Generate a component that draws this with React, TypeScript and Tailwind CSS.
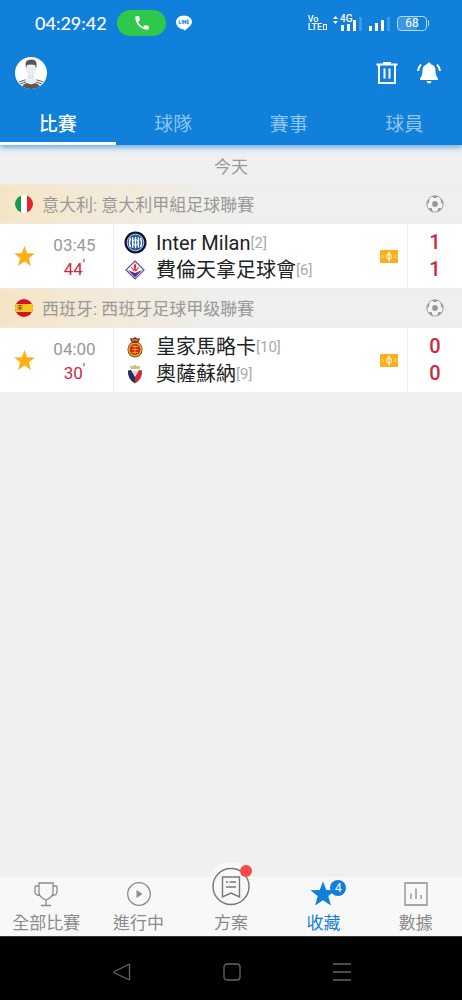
import React from 'react';
import clsx from 'clsx';

const tabs = ['比賽', '球隊', '賽事', '球員'];

const leagues = [
  {
    name: '意大利: 意大利甲組足球聯賽',
    Flag: ItalyFlag,
    time: '03:45',
    minute: '44',
    teams: [
      { name: 'Inter Milan', rank: 2, score: 1, Crest: InterCrest },
      { name: '費倫天拿足球會', rank: 6, score: 1, Crest: FiorentinaCrest },
    ],
  },
  {
    name: '西班牙: 西班牙足球甲级聯賽',
    Flag: SpainFlag,
    time: '04:00',
    minute: '30',
    teams: [
      { name: '皇家馬略卡', rank: 10, score: 0, Crest: MallorcaCrest },
      { name: '奧薩蘇納', rank: 9, score: 0, Crest: OsasunaCrest },
    ],
  },
];

const STAR = 'M12 1l2.800 7.600 8 .2-6.300 5 2.300 8L12 17.300 5.200 21.800l2.300-8-6.300-5 8-.2z';

function ItalyFlag() {
  return (
    <svg className="h-[18px] w-[18px] rounded-full" viewBox="0 0 18 18" aria-hidden="true">
      <rect width="18" height="18" fill="#fff" />
      <rect width="6" height="18" fill="#149a4c" />
      <rect x="12" width="6" height="18" fill="#e9202e" />
    </svg>
  );
}

function SpainFlag() {
  return (
    <svg className="h-[18px] w-[18px] rounded-full" viewBox="0 0 18 18" aria-hidden="true">
      <rect width="18" height="18" fill="#d31320" />
      <rect y="5" width="18" height="8" fill="#fbc913" />
      <path d="M2.500 7v4.500M7.500 7v4.500" stroke="#c9a27a" />
      <path d="M3.500 7.500h3V10q-1.500 2-3 0z" fill="#c8432b" />
      <path d="M3.500 6.500h3" stroke="#a3301f" />
    </svg>
  );
}

function InterCrest() {
  return (
    <svg className="h-[23px] w-[23px]" viewBox="0 0 24 24" aria-hidden="true">
      <circle cx="12" cy="12" r="11.500" fill="#0c1330" />
      <circle cx="12" cy="12" r="8.700" fill="#1c57a5" stroke="#fff" strokeWidth=".8" />
      <path d="M12 6v12M9 6.500v11M15 6.500v11M6.800 7q-2 5 0 10M17.200 7q2 5 0 10" fill="none" stroke="#fff" strokeWidth="1.500" />
      <circle cx="12" cy="12" r="3" fill="none" stroke="#fff" />
    </svg>
  );
}

function FiorentinaCrest() {
  return (
    <svg className="h-5 w-5" viewBox="0 0 20 20" aria-hidden="true">
      <path d="M10 1l9 9-9 9-9-9z" fill="#fff" stroke="#684a96" strokeWidth="1.200" />
      <path d="M3 10l4.500 2L10 13l2.500-1L17 10l-7 7.500z" fill="#582c83" />
      <path d="M10 3l1.300 3L10 12.500 8.700 6z" fill="#e5202f" />
      <path d="M9.500 9.500Q6.500 9.500 6.500 7M10.500 9.500q3 0 3-2.500M7.500 10.200h5" fill="none" stroke="#e5202f" />
    </svg>
  );
}

function MallorcaCrest() {
  return (
    <svg className="h-[22px] w-[18px]" viewBox="0 0 18 22" aria-hidden="true">
      <path d="M5 5.500L4 2l2.500.5L9 1l2.500 1.500L14 2l-1 3.500z" fill="#8d3025" />
      <path d="M6 4h6" stroke="#e8ad27" />
      <ellipse cx="9" cy="13.500" rx="7.500" ry="8" fill="#5b3a1c" />
      <ellipse cx="9" cy="13.500" rx="6.800" ry="7.300" fill="#efa91b" />
      <ellipse cx="9" cy="13.500" rx="5.300" ry="5.800" fill="#d32b27" />
      <path d="M6 10.500h6M6 13.500h6M6 16.500h6M9 9v9" stroke="#f5bd25" strokeWidth=".8" />
      <path d="M5.500 6h7" stroke="#34301b" strokeWidth="1.200" />
    </svg>
  );
}

function OsasunaCrest() {
  return (
    <svg className="h-5 w-[18px]" viewBox="0 0 18 20" aria-hidden="true">
      <path d="M5 4.500L4.500 2l2.300 1L9 1l2.200 2 2.300-1-.5 2.500z" fill="#d7c16f" stroke="#aaa06d" strokeWidth=".5" />
      <path d="M2 6.500q7-1.500 14 0 1 8-7 13-8-5-7-13z" fill="#f5f3f4" />
      <path d="M2 6.500l3-.5 4 7v6.500q-8-5-7-13z" fill="#202f62" />
      <path d="M16 6.500l-3-.5-4 7v6.500q8-5 7-13z" fill="#d42932" />
      <path d="M7 7h4v2.500L9 11.500l-2-2z" fill="#ddd4d9" />
    </svg>
  );
}

function BallIcon() {
  return (
    <svg className="h-[18px] w-[18px]" viewBox="0 0 18 18" aria-hidden="true">
      <circle cx="9" cy="9" r="8.200" fill="#f4f4f4" stroke="#a0a5a9" />
      <circle cx="9" cy="9" r="2.900" fill="#92989e" />
      <path d="M5.500 1.500L9 3.300l3.500-1.800Q9-.2 5.500 1.500zM1 9.500l2-2 .5-4.300Q.8 5.500 1 9.500zM17 9.500l-2-2-.5-4.300q2.700 2.300 2.500 6.300zM2.300 13.300l3.300-.2 1.400 3.900q-3-.6-4.700-3.700zM15.700 13.300l-3.300-.2L11 17q3-.6 4.700-3.700z" fill="#92989e" />
    </svg>
  );
}

function PitchIcon() {
  return (
    <svg className="h-[13px] w-[18px]" viewBox="0 0 18 13" aria-hidden="true">
      <rect width="18" height="13" rx="1" fill="#fbb01b" />
      <circle cx="9" cy="6.500" r="2.600" fill="none" stroke="#fff" />
      <path d="M9 1.500v10" stroke="#fff" />
      <path d="M2 5l1 1.500L2 8M16 5l-1 1.500L16 8" fill="none" stroke="#fff" strokeWidth=".8" />
    </svg>
  );
}

function StatusBar() {
  return (
    <div className="flex h-[46px] items-center pl-[35px] pr-[33px]">
      <span className="w-[82px] font-['Lato'] text-[18px] font-medium leading-6">04:29:42</span>
      <span className="flex h-[26px] w-[49px] items-center justify-center rounded-full bg-[#2fc84d]">
        <svg className="h-[18px] w-[18px]" viewBox="0 0 24 24" fill="#fff" aria-hidden="true">
          <path d="M6.600 10.800c1.400 2.800 3.800 5.100 6.600 6.600l2.200-2.200c.3-.3.700-.4 1-.2 1.100.4 2.300.6 3.600.6.600 0 1 .4 1 1V20c0 .600-.4 1-1 1C10.600 21 3 13.400 3 4c0-.6.500-1 1-1h3.500c.600 0 1 .4 1 1 0 1.200.2 2.400.6 3.600.1.300 0 .7-.2 1z" />
        </svg>
      </span>
      <svg className="ml-2.5 h-4 w-4" viewBox="0 0 16 16" aria-hidden="true">
        <path d="M8 .5c4.400 0 8 2.900 8 6.400 0 2.400-2 4.800-7.500 8.700-.7.400-.7-.2-.6-1.300C3.500 14 0 11 0 6.900 0 3.400 3.600.5 8 .5z" fill="#fff" />
        <path d="M3.200 5.200v3.400h1.900M6.200 5v3.800M7.600 8.800V5.300l2 3.200V5M13 5.300h-2v3.300h2M11 7h1.700" fill="none" stroke="#1080da" strokeWidth=".9" />
      </svg>
      <div className="ml-auto flex items-center">
        <div className="mr-1.5 font-['Roboto'] text-[9px] font-medium leading-2">
          <div>Vo</div>
          <div className="flex items-center">
            LTE
            <span className="ml-px h-1.5 w-1 border border-white" />
          </div>
        </div>
        <span className="flex items-start">
          <svg className="mt-px h-2 w-[5px]" viewBox="0 0 5 8" fill="#fff" aria-hidden="true">
            <path d="M0 3l2.500-3L5 3zM0 5l2.500 3L5 5z" />
          </svg>
          <span className="relative h-4 w-[25px]">
            <span className="absolute left-0.5 top-0 font-['Roboto'] text-[10px] font-medium leading-2">4G</span>
            <svg className="h-4 w-[25px]" viewBox="0 0 25 16" fill="#fff" aria-hidden="true">
              <path d="M3 10h3v6H3zM9 9h3v7H9zM15 5h3v11h-3z" />
              <path d="M21 2h3v14h-3z" opacity=".2" />
            </svg>
          </span>
        </span>
        <svg className="ml-1.5 h-4 w-[21px]" viewBox="0 0 21 16" fill="#fff" aria-hidden="true">
          <path d="M0 11h3v5H0zM6 8h3v8H6zM12 5h3v11h-3z" />
          <path d="M18 2h3v14h-3z" opacity=".2" />
        </svg>
        <span className="ml-[7px] flex h-[15px] w-[30px] items-center justify-center rounded border border-[#b8d9f5] bg-linear-to-r from-[#3c97df] from-68% to-[#1080da] to-68% text-[12px] leading-3">
          68
        </span>
        <span className="ml-px h-1.5 w-px bg-[#b8d9f5]" />
      </div>
    </div>
  );
}

function Avatar() {
  return (
    <svg className="h-8 w-8 rounded-full" viewBox="0 0 32 32" aria-hidden="true">
      <rect width="32" height="32" fill="#fff" />
      <path d="M6 32q1-5 6-6l4 1 4-1q5 1 6 6z" fill="#58595b" />
      <path d="M4 24.500q6-1 8-3.500l4 2 4-2q2 2.500 8 3.500l-3 2-5-.5-4 1.500-4-1.500-5 .5z" fill="#efefef" />
      <path d="M3.500 25l7-2.200M5 27l6-2M28.500 25l-7-2.200M27 27l-6-2" stroke="#4d4e50" strokeWidth=".9" />
      <path d="M13 16h6v5q-3 2.500-6 0z" fill="#e2e3e5" />
      <ellipse cx="16" cy="12" rx="4.800" ry="7" fill="#ecedef" />
      <path d="M11 11.500Q9.500 4 13 3.200q4-1.500 7 .300 2.500 2 1 8l-1-3.500q-4-1-8 0z" fill="#535557" />
    </svg>
  );
}

function Header() {
  return (
    <header className="relative bg-[#1080da] text-white shadow-[0_2px_6px_rgba(16,128,218,0.7)]">
      <StatusBar />
      <div className="flex h-[54px] items-center justify-between pl-[15px] pr-[21px]">
        <button type="button" aria-label="Profile">
          <Avatar />
        </button>
        <div className="flex items-center gap-[18px]">
          <button type="button" aria-label="Delete">
            <svg className="h-6 w-6" viewBox="0 0 24 24" fill="none" stroke="#fff" strokeWidth="2" aria-hidden="true">
              <path d="M1.500 3.500h21M8 2h8M4 4v18h16V4M9.500 7.500v10M14.500 7.500v10" />
            </svg>
          </button>
          <button type="button" aria-label="Notifications">
            <svg className="h-6 w-6" viewBox="0 0 24 24" aria-hidden="true">
              <path d="M12 1.500c1 0 1.500.7 1.500 1.500C17 4 18.500 6.500 18.500 9.500c0 4 1 6 2.500 8V19H3v-1.500c1.500-2 2.500-4 2.500-8C5.500 6.500 7 4 10.500 3c0-.8.5-1.500 1.500-1.500zM9.500 20h5q-.5 2.500-2.500 2.500T9.500 20z" fill="#fff" />
              <path d="M4 3.500Q1.500 6 1 10M20 3.500q2.500 2.500 3 6.500" fill="none" stroke="#fff" strokeWidth="2" />
            </svg>
          </button>
        </div>
      </div>
      <nav className="grid h-[45px] grid-cols-4">
        {tabs.map((tab, i) => (
          <button
            key={tab}
            type="button"
            className={clsx(
              'border-b-[3px] pt-2 text-[19px] leading-7',
              i === 0 ? 'border-white font-medium' : 'border-transparent text-[#8fc5f3]',
            )}
          >
            {tab}
          </button>
        ))}
      </nav>
    </header>
  );
}

function League({ league }: { league: (typeof leagues)[number] }) {
  const { name, Flag, time, minute, teams } = league;

  return (
    <section>
      <div className="flex h-10 items-center border-y border-[#ebebeb] bg-linear-to-r from-[#f5e5c5] to-[#efefef] to-50% pl-[15px] pr-[18px]">
        <Flag />
        <h2 className="ml-[9px] flex-1 pt-px text-[17px] leading-6 text-[#999]">{name}</h2>
        <BallIcon />
      </div>
      <div className="flex h-16 bg-white">
        <div className="flex w-[114px] items-center border-r border-[#ededed]">
          <button type="button" aria-label="Favourite" className="flex w-[49px] justify-center">
            <svg className="h-[23px] w-[23px]" viewBox="0 0 24 24" fill="#ffae14" aria-hidden="true">
              <path d={STAR} />
            </svg>
          </button>
          <div className="w-[51px] pt-0.5 text-center text-[17px] leading-6">
            <div className="text-[#999]">{time}</div>
            <div className="text-[#d02840]">
              {minute}
              <span className="align-top text-[14px] leading-4">'</span>
            </div>
          </div>
        </div>
        <div className="flex flex-1 flex-col justify-center pl-[9px]">
          {teams.map(({ name, rank, Crest }) => (
            <div key={name} className="flex h-[27px] items-center">
              <span className="flex w-6 justify-center">
                <Crest />
              </span>
              <span className="ml-[9px] text-[20px] leading-7 text-[#222]">{name}</span>
              <span className="text-[15px] leading-5 text-[#aaa]">[{rank}]</span>
            </div>
          ))}
        </div>
        <div className="flex items-center pr-[9px]">
          <PitchIcon />
        </div>
        <div className="flex w-[55px] flex-col justify-center border-l border-[#ededed] text-center text-[20px] font-medium leading-[27px] text-[#d02840]">
          {teams.map(({ name, score }) => (
            <span key={name}>{score}</span>
          ))}
        </div>
      </div>
    </section>
  );
}

function BottomNav() {
  const item = 'flex flex-col items-center justify-end gap-[3px] pb-px';
  const icon = { className: 'h-7 w-7', viewBox: '0 0 28 28', fill: 'none', stroke: 'currentColor', strokeWidth: 1.3 };

  return (
    <nav className="grid h-[59px] grid-cols-5 bg-[#f8f8f8] text-[17px] leading-6 text-[#8b8b8b]">
      <button type="button" className={item}>
        <svg {...icon} aria-hidden="true">
          <path d="M7 3h14v9.500q0 4.500-7 7.500-7-3-7-7.500zM7 6H4Q3 6 3 7v5q0 3 4.500 3.500M21 6h3q1 0 1 1v5q0 3-4.500 3.500M14 20v5.500M9 25.500h10" />
        </svg>
        全部比賽
      </button>
      <button type="button" className={item}>
        <svg {...icon} aria-hidden="true">
          <circle cx="14" cy="14" r="11.300" />
          <path d="M11.500 10l6 4-6 4z" fill="currentColor" stroke="none" />
        </svg>
        進行中
      </button>
      <button type="button" className={clsx(item, 'relative')}>
        <span className="absolute -top-[15px] left-1/2 flex h-12 w-12 -translate-x-1/2 items-center justify-center rounded-full bg-[#f8f8f8]">
          <svg className="h-10 w-10" viewBox="0 0 40 40" fill="none" stroke="#777" strokeWidth="1.400" aria-hidden="true">
            <circle cx="20" cy="20.500" r="18" />
            <path d="M11.500 11h17v20L20 27l-8.500 4zM15 16h2M18.500 16H25M15 21h10" />
          </svg>
          <span className="absolute right-[3px] top-[3px] h-3 w-3 rounded-full bg-[#ff4848]" />
        </span>
        方案
      </button>
      <button type="button" className={clsx(item, 'text-[#1080da]')}>
        <span className="relative">
          <svg className="h-7 w-7" viewBox="0 0 24 24" fill="currentColor" aria-hidden="true">
            <path d={STAR} />
          </svg>
          <span className="absolute -right-[9px] top-0 flex h-4 w-4 items-center justify-center rounded-full bg-[#1080da] text-[12px] leading-3 text-white">
            4
          </span>
        </span>
        收藏
      </button>
      <button type="button" className={item}>
        <svg {...icon} aria-hidden="true">
          <path d="M3 3h22v22H3zM9 13.500V19M14 8.500V19M19 15v4" />
        </svg>
        數據
      </button>
    </nav>
  );
}

function SystemNav() {
  const icon = { className: 'h-5 w-5', viewBox: '0 0 20 20', fill: 'none', stroke: '#666', strokeWidth: 1.3 };

  return (
    <div className="flex h-16 items-center justify-center gap-[90px] border-t border-[#333] bg-black pl-0.5 pt-[7px]">
      <button type="button" aria-label="Back">
        <svg {...icon} strokeLinejoin="round" aria-hidden="true">
          <path d="M17.500 3v14q0 1-1 .500L2.500 11q-1-1 0-1.500l14-7q1-.5 1 .5z" />
        </svg>
      </button>
      <button type="button" aria-label="Home">
        <svg {...icon} aria-hidden="true">
          <rect x="2" y="2" width="16" height="16" rx="3" />
        </svg>
      </button>
      <button type="button" aria-label="Recent apps">
        <svg {...icon} aria-hidden="true">
          <path d="M1 2h18M1 10h18M1 18h18" />
        </svg>
      </button>
    </div>
  );
}

export default function App() {
  return (
    <div className="flex min-h-screen flex-col bg-[#f0f0f0] font-['Roboto','Noto_Sans_CJK_TC',sans-serif]">
      <Header />
      <main className="flex-1">
        <div className="flex h-[39px] items-center justify-center pt-1 text-[17px] leading-6 text-[#999]">今天</div>
        {leagues.map((league) => (
          <League key={league.name} league={league} />
        ))}
      </main>
      <BottomNav />
      <SystemNav />
    </div>
  );
}
